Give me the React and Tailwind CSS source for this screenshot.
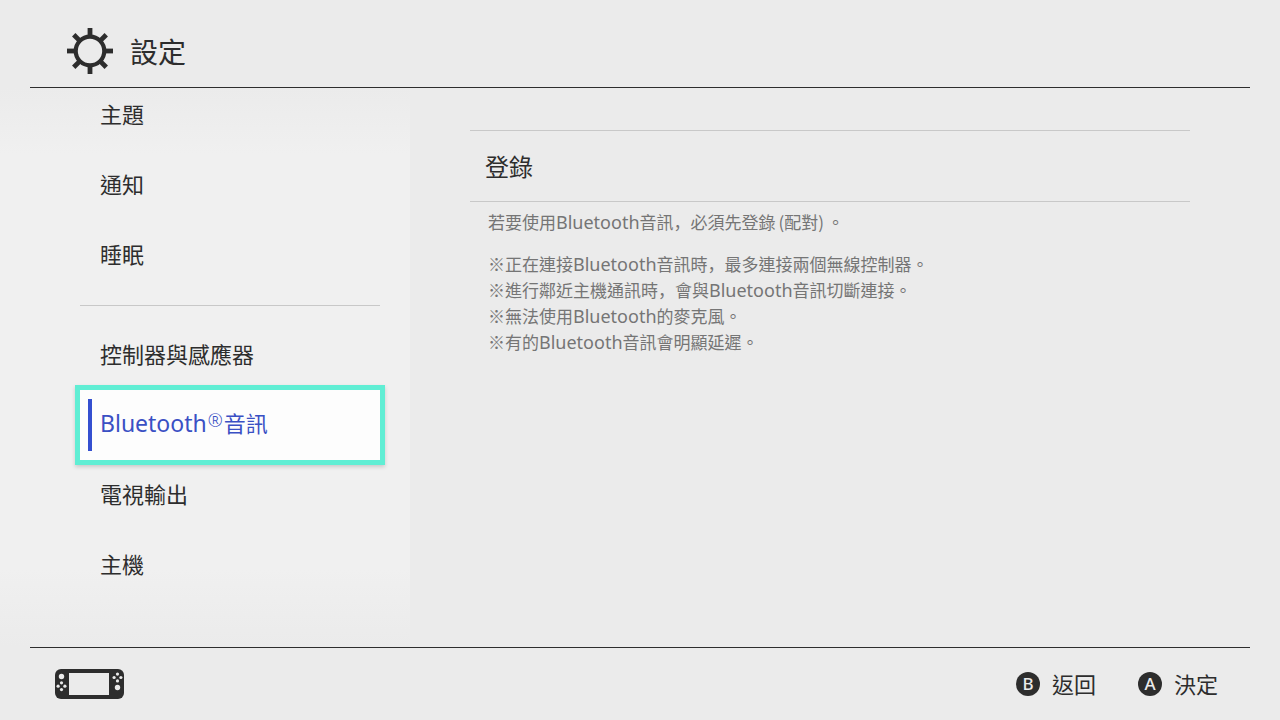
const menuGroups = [
  ['主題', '通知', '睡眠'],
  ['控制器與感應器', 'Bluetooth®音訊', '電視輸出', '主機'],
];

const SELECTED = 'Bluetooth®音訊';

function GearIcon() {
  const teeth = [0, 45, 90, 135, 180, 225, 270, 315];
  return (
    <svg width="48" height="48" viewBox="0 0 48 48" fill="none" stroke="#2d2d2d" aria-hidden="true">
      <circle cx="24" cy="24" r="14.3" strokeWidth="4.2" />
      {teeth.map((angle) => (
        <path key={angle} d="M24 10V1" strokeWidth="4.8" transform={`rotate(${angle} 24 24)`} />
      ))}
    </svg>
  );
}

function ConsoleIcon() {
  return (
    <svg width="69" height="30" viewBox="0 0 69 30" role="img" aria-label="主機">
      <rect width="69" height="30" rx="6" fill="#2d2d2d" />
      <rect x="14" y="4" width="40" height="22" fill="#ebebeb" />
      <g fill="#ebebeb">
        <circle cx="6.5" cy="7.5" r="2.7" />
        <circle cx="6.5" cy="13.8" r="1.6" />
        <circle cx="6.5" cy="20.6" r="1.6" />
        <circle cx="3.1" cy="17.2" r="1.6" />
        <circle cx="9.9" cy="17.2" r="1.6" />
        <circle cx="62.5" cy="5.1" r="1.6" />
        <circle cx="62.5" cy="11.9" r="1.6" />
        <circle cx="59.1" cy="8.5" r="1.6" />
        <circle cx="65.9" cy="8.5" r="1.6" />
        <circle cx="62.5" cy="18.5" r="2.7" />
      </g>
    </svg>
  );
}

function Comma() {
  return <span className="font-['Noto_Sans_CJK_JP',sans-serif]" lang="ja">，</span>;
}

function Bluetooth() {
  return <span className="font-['Noto_Sans',sans-serif] text-[18px]">Bluetooth</span>;
}

function MenuItem({ label }) {
  if (label === SELECTED) {
    return (
      <button
        type="button"
        aria-current="page"
        className="flex h-[70px] w-full items-center gap-2 bg-[#fdfdfd] pl-2 text-left text-[22px] text-[#3a50c4] outline-5 outline-[#60eed4] shadow-[0_2px_4px_5px_rgba(0,0,0,0.16)]"
      >
        <span className="h-[52px] w-1 bg-[#344fd0]" />
        <span className="flex items-baseline pb-1">
          <span className="font-['Noto_Sans',sans-serif] text-[23px]">Bluetooth</span>
          <span className="mx-px self-start font-['Noto_Sans',sans-serif] text-[18px] leading-7 font-light">®</span>
          <span>音訊</span>
        </span>
      </button>
    );
  }

  return (
    <button type="button" className="flex h-[70px] w-full items-center pb-1 pl-5 text-left text-[22px]">
      {label}
    </button>
  );
}

function Sidebar() {
  return (
    <nav
      aria-label="設定"
      className="w-[410px] shrink-0 overflow-hidden bg-[linear-gradient(to_bottom,#ebebeb,#f0f0f0_12%,#f0f0f0_86%,#ebebeb)] pr-[30px] pl-20"
    >
      <div className="-mt-2">
        {menuGroups.map((group, i) => (
          <ul key={group[0]} className={i > 0 ? 'mt-[15px] border-t border-[#c8c8c8] pt-[14px]' : ''}>
            {group.map((label) => (
              <li key={label}>
                <MenuItem label={label} />
              </li>
            ))}
          </ul>
        ))}
      </div>
    </nav>
  );
}

function KeyHint({ letter, label }) {
  return (
    <button type="button" className="flex items-center gap-3 text-[22px]">
      <span className="flex size-6 items-center justify-center rounded-full bg-[#2d2d2d] font-['Noto_Sans',sans-serif] text-[17px] font-medium text-[#ebebeb]">
        {letter}
      </span>
      <span className="pb-0.5">{label}</span>
    </button>
  );
}

function App() {
  return (
    <div
      lang="zh-Hant"
      className="flex min-h-screen flex-col bg-[#ebebeb] font-['Noto_Sans_CJK_TC',sans-serif] text-[#2d2d2d]"
    >
      <header className="mx-[30px] flex h-[88px] items-center gap-4 border-b border-[#2d2d2d] pt-[14px] pl-9">
        <GearIcon />
        <h1 className="text-[28px] leading-10">設定</h1>
      </header>

      <main className="flex flex-1">
        <Sidebar />
        <section className="flex-1 pt-[42px] pr-[90px] pl-[60px]">
          <button
            type="button"
            className="flex h-[72px] w-full items-center border-y border-[#c8c8c8] pl-[15px] text-left text-2xl"
          >
            登錄
          </button>
          <div className="pt-[7px] pl-[18px] text-[17px] leading-[26px] text-[#757575]">
            <p>
              若要使用<Bluetooth />音訊<Comma />必須先登錄<span className="mx-[3px]">(配對)</span>。
            </p>
            <ul className="mt-4">
              <li>※正在連接<Bluetooth />音訊時<Comma />最多連接兩個無線控制器。</li>
              <li>※進行鄰近主機通訊時<Comma />會與<Bluetooth />音訊切斷連接。</li>
              <li>※無法使用<Bluetooth />的麥克風。</li>
              <li>※有的<Bluetooth />音訊會明顯延遲。</li>
            </ul>
          </div>
        </section>
      </main>

      <footer className="mx-[30px] flex h-[73px] items-center justify-between border-t border-[#2d2d2d] pr-8 pl-[25px]">
        <ConsoleIcon />
        <div className="flex gap-[42px]">
          <KeyHint letter="B" label="返回" />
          <KeyHint letter="A" label="決定" />
        </div>
      </footer>
    </div>
  );
}

export default App;
